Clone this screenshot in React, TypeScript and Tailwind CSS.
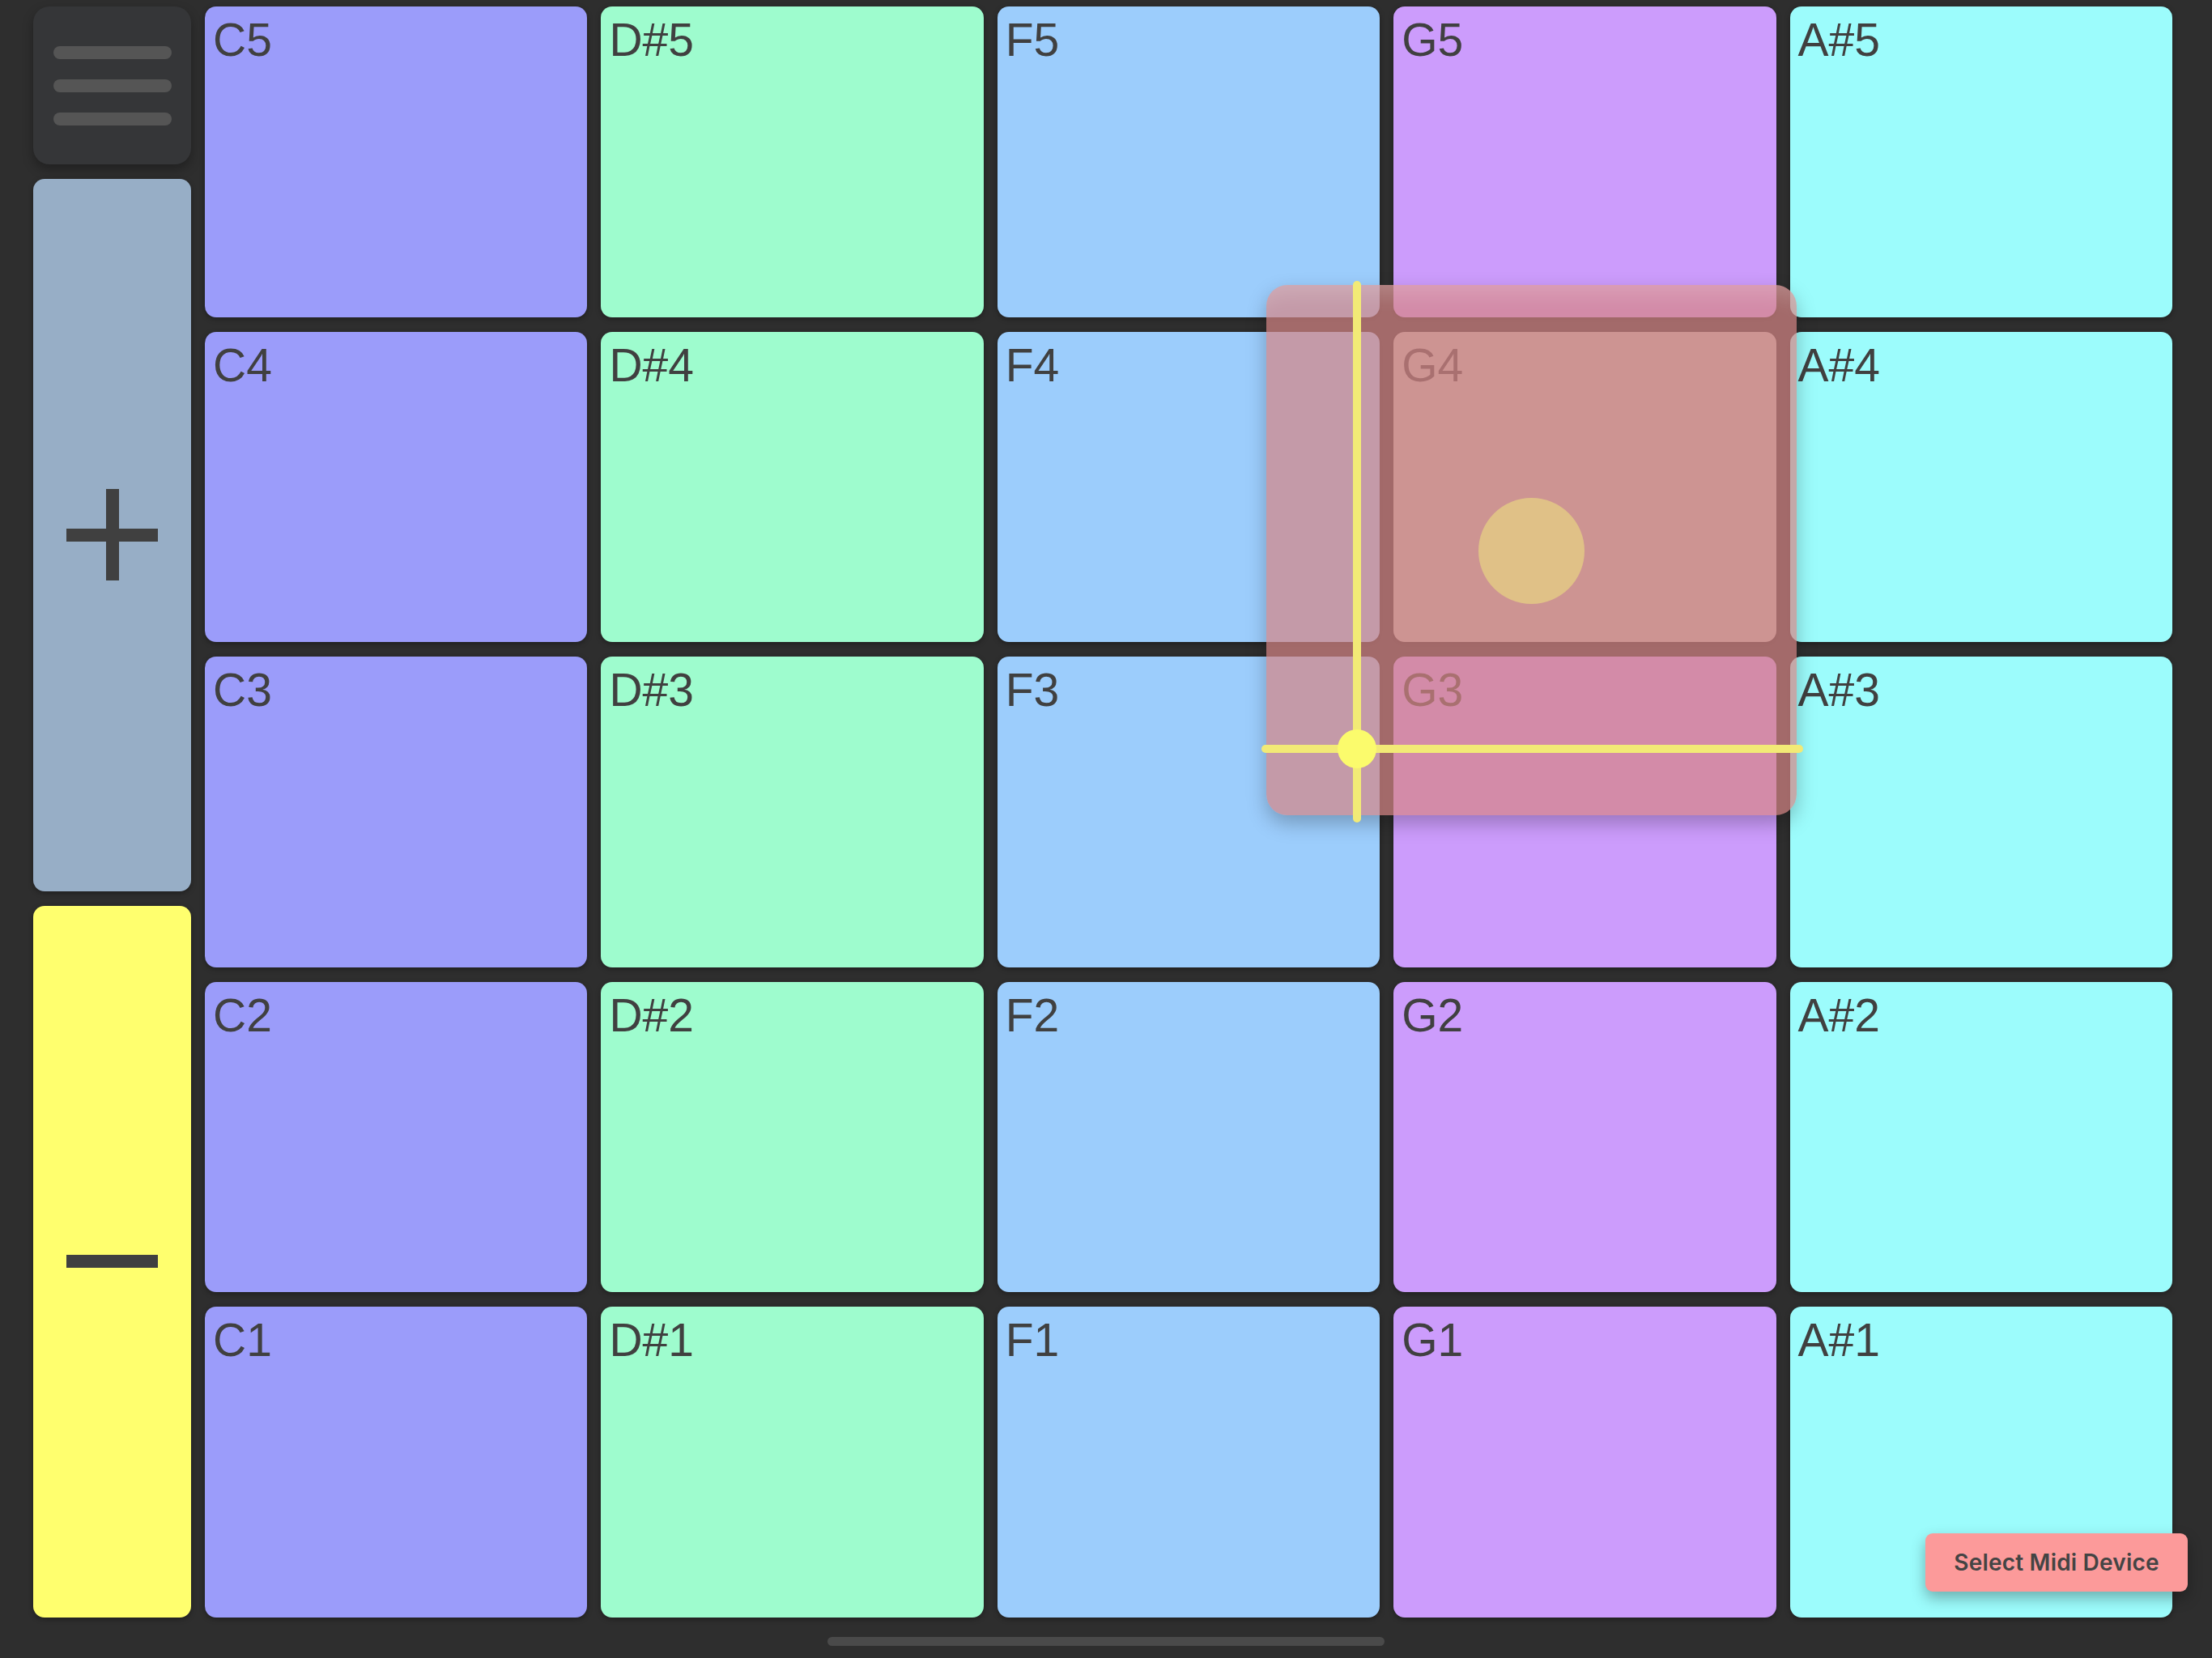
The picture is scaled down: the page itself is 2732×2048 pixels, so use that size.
import React from 'react';

const columns = [
  { note: 'C', bg: 'bg-[#9b9cfa]' },
  { note: 'D#', bg: 'bg-[#9efcce]' },
  { note: 'F', bg: 'bg-[#9ccdfc]' },
  { note: 'G', bg: 'bg-[#cc9cfc]' },
  { note: 'A#', bg: 'bg-[#9cfcfc]' },
];

const octaves = [5, 4, 3, 2, 1];

const Pad = ({ label, bg }: { label: string; bg: string }) => (
  <div
    className={`${bg} rounded-[14px] shadow-[0_2px_6px_rgba(0,0,0,0.35)] pl-[10px] pt-[13px] text-[57px] leading-none text-[#404040] font-['Liberation_Sans',Arial,sans-serif]`}
  >
    {label}
  </div>
);

const App = () => {
  return (
    <div className="relative w-[2732px] h-[2048px] overflow-hidden bg-[#2e2e2e] flex gap-[17px] pt-[8px] pl-[41px] pr-[49px] pb-[50px]">
      {/* side controls */}
      <div className="w-[195px] flex flex-col gap-[18px]">
        <button className="h-[195px] rounded-[20px] bg-[#353638] shadow-[0_6px_14px_rgba(0,0,0,0.3)] flex flex-col items-center pt-[49px] gap-[25px]">
          <span className="block w-[146px] h-[16px] rounded-full bg-[#555555]" />
          <span className="block w-[146px] h-[16px] rounded-full bg-[#555555]" />
          <span className="block w-[146px] h-[16px] rounded-full bg-[#555555]" />
        </button>
        <button className="flex-1 rounded-[14px] bg-[#97aec6] shadow-[0_2px_6px_rgba(0,0,0,0.35)] flex items-center justify-center">
          <svg width="113" height="113" viewBox="0 0 113 113">
            <rect x="49" y="0" width="16" height="113" fill="#404040" />
            <rect x="0" y="49" width="113" height="16" fill="#404040" />
          </svg>
        </button>
        <button className="flex-1 rounded-[14px] bg-[#ffff6e] shadow-[0_2px_6px_rgba(0,0,0,0.35)] flex items-center justify-center">
          <span className="block w-[113px] h-[16px] bg-[#404040]" />
        </button>
      </div>

      {/* pad grid */}
      <div className="flex-1 grid grid-cols-5 grid-rows-5 gap-x-[17px] gap-y-[18px]">
        {octaves.map((o) =>
          columns.map((c) => (
            <Pad
              key={`${c.note}${o}`}
              label={`${c.note}${o}`}
              bg={c.note === 'G' && o === 4 ? 'bg-[#bab9b3]' : c.bg}
            />
          ))
        )}
      </div>

      {/* XY touch overlay */}
      <div className="absolute left-[1564px] top-[352px] w-[655px] h-[655px] rounded-[26px] bg-[rgba(213,133,133,0.7)] shadow-[0_10px_24px_rgba(0,0,0,0.25),inset_0_36px_24px_-24px_rgba(255,255,255,0.18)]" />
      <div className="absolute left-[1826px] top-[615px] w-[131px] h-[131px] rounded-full bg-[#e0c187]" />
      <div className="absolute left-[1671px] top-[347px] w-[10px] h-[669px] rounded-full bg-[#f2ea76]" />
      <div className="absolute left-[1558px] top-[920px] w-[669px] h-[10px] rounded-full bg-[#f2ea76]" />
      <div className="absolute left-[1652px] top-[901px] w-[48px] h-[48px] rounded-full bg-[#fbfb6c]" />

      {/* midi device */}
      <button className="absolute left-[2378px] top-[1894px] w-[324px] h-[72px] rounded-[9px] bg-[#fc9a9a] shadow-[0_8px_18px_rgba(0,0,0,0.3)] text-[28px] font-semibold text-[#444444] font-['Inter',sans-serif] tracking-[0.2px]">
        Select Midi Device
      </button>

      {/* home indicator */}
      <div className="absolute left-[1022px] top-[2022px] w-[688px] h-[11px] rounded-full bg-[#4a4a4a]" />
    </div>
  );
};

export default App;
